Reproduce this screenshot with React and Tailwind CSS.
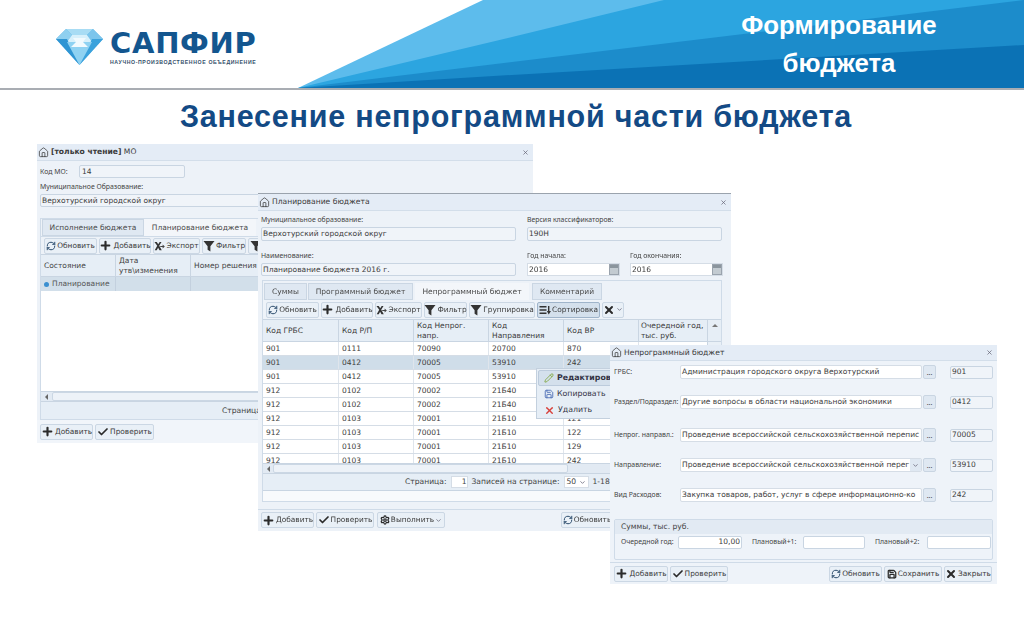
import { Home, Plus, Check, X, RefreshCw, Settings, Save, Pencil, ChevronDown } from 'lucide-react';

const VALUE = "font-['DejaVu_Sans',sans-serif] text-[7.5px] text-[#3c3c3c]";
const LABEL = "font-['Noto_Sans',sans-serif] text-[6.9px] text-[#444] leading-[10px] whitespace-nowrap";

function Funnel({ size = 12, className = '' }) {
  return (
    <svg width={size} height={size} viewBox="0 0 12 12" className={className}>
      <path d="M0.5 1h11L7.4 6.2V11.5L4.6 9.8V6.2z" fill="#333" />
    </svg>
  );
}

function ExportIcon() {
  return (
    <svg width="11" height="10" viewBox="0 0 12 10">
      <path d="M0.5 0.5h2.5l1.6 2.6L6.2.5h2L5.7 4.7l2.8 4.8H6L4.5 6.9 3 9.5H.8l2.7-4.7z" fill="#333" />
      <path d="M6.8 5h2.6V3.4L11.8 5.6 9.4 7.8V6.2H6.8z" fill="#444" />
    </svg>
  );
}

function SortIcon() {
  return (
    <svg width="12" height="10" viewBox="0 0 12 10">
      <path d="M0.5 1h7v1.6h-7zM0.5 4.2h7v1.6h-7zM0.5 7.4h7V9h-7z" fill="#333" />
      <path d="M9 1h1.4v5H12L9.7 9.4 7.9 6H9z" fill="#333" />
    </svg>
  );
}

function Btn({ icon, children, className = '', active = false }) {
  return (
    <div
      className={`h-[16px] shrink-0 flex items-center justify-center gap-[1px] rounded-[2px] border px-[1px] font-['DejaVu_Sans',sans-serif] text-[7.4px] leading-none text-[#3b3b3b] whitespace-nowrap [&>svg]:shrink-0 ${active ? 'border-[#9fb4ca] bg-[#d4e0ec]' : 'border-[#cbd7e4] bg-[#e9f0f7]'} ${className}`}
    >
      {icon}
      {children}
    </div>
  );
}

const refresh = <RefreshCw size={10} strokeWidth={2.4} className="text-[#2f4f6f]" />;
const plus = <Plus size={13} strokeWidth={4} className="text-[#2b2b2b]" />;
const check = <Check size={12} strokeWidth={3.5} className="text-[#2b2b2b]" />;
const cross = <X size={12} strokeWidth={4} className="text-[#2b2b2b]" />;

function TitleBar({ title, className = '' }) {
  return (
    <div className={`flex items-center shrink-0 gap-[2px] bg-[#e4ecf6] border-b border-[#d3deea] pl-[1px] pr-[4px] ${className}`}>
      <Home size={11} strokeWidth={1.6} className="text-[#333] shrink-0" />
      <div className="text-[7.6px] font-['DejaVu_Sans',sans-serif] text-[#3a3a3a] flex-1 whitespace-nowrap">{title}</div>
      <X size={7} strokeWidth={2.5} className="text-[#667]" />
    </div>
  );
}

function Field({ children, className = '' }) {
  return (
    <div className={`${VALUE} shrink-0 flex items-center overflow-hidden whitespace-nowrap rounded-[2px] border border-[#c9d5e2] bg-[#f0f4f9] pl-[1px] ${className}`}>
      {children}
    </div>
  );
}

function Tab({ children, active, className = '' }) {
  return (
    <div className={`shrink-0 flex items-center justify-center font-['DejaVu_Sans',sans-serif] text-[7.5px] text-[#4a4a4a] whitespace-nowrap ${active ? 'bg-[#f3f6fa]' : 'bg-[#dfe8f2] border border-[#cad6e3]'} ${className}`}>
      {children}
    </div>
  );
}

const ROWS = [
  ['901', '0111', '70090', '20700', '870'],
  ['901', '0412', '70005', '53910', '242'],
  ['901', '0412', '70005', '53910', ''],
  ['912', '0102', '70002', '21Б40', ''],
  ['912', '0102', '70002', '21Б40', ''],
  ['912', '0103', '70001', '21Б10', '121'],
  ['912', '0103', '70001', '21Б10', '122'],
  ['912', '0103', '70001', '21Б10', '129'],
  ['912', '0103', '70001', '21Б10', '242'],
];

function BudgetTable() {
  return (
    <div className="relative flex-1 flex flex-col overflow-hidden">
      <div className="h-[23px] shrink-0 grid grid-cols-[76px_75px_75px_75px_75px_68px_1fr] bg-[#e6eef6] border-y border-[#c9d5e2] text-[7.5px] leading-[10px] font-['DejaVu_Sans',sans-serif] text-[#3b3b3b]">
        <div className="flex items-center px-[3px] border-r border-[#c9d5e2]">Код ГРБС</div>
        <div className="flex items-center px-[3px] border-r border-[#c9d5e2]">Код Р/П</div>
        <div className="flex items-center px-[3px] border-r border-[#c9d5e2]">Код Непрог. напр.</div>
        <div className="flex items-center px-[3px] border-r border-[#c9d5e2]">Код Направления</div>
        <div className="flex items-center px-[3px] border-r border-[#c9d5e2]">Код ВР</div>
        <div className="flex items-center px-[2px] whitespace-nowrap">Очередной год,<br />тыс. руб.</div>
        <div className="flex justify-center pt-[4px] border-l border-[#c9d5e2]">
          <div className="w-0 h-0 border-x-[3px] border-x-transparent border-b-[3px] border-b-[#777]" />
        </div>
      </div>
      <div className="h-[121px] overflow-hidden bg-white">
        {ROWS.map((row, i) => (
          <div
            key={i}
            className={`h-[14px] grid grid-cols-[76px_75px_75px_75px_75px_68px_1fr] border-b border-[#d5dde6] ${VALUE} ${i === 1 ? 'bg-[#cfdde9]' : 'bg-white'}`}
          >
            {row.map((cell, j) => (
              <div key={j} className="flex items-center px-[3px] border-r border-[#dfe5ec]">{cell}</div>
            ))}
            <div />
            <div className="bg-[#e9f0f7] border-l border-[#c9d5e2]" />
          </div>
        ))}
      </div>
      <div className="h-[11px] shrink-0 flex items-center bg-[#e2eaf3] border-y border-[#c9d5e2] pl-[4px]">
        <div className="w-0 h-0 border-y-[3px] border-y-transparent border-r-[3px] border-r-[#666]" />
        <div className="ml-[3px] h-[9px] w-[295px] bg-[#edf2f8] border border-[#cbd7e4] rounded-[2px]" />
      </div>
      <div className="h-[17px] shrink-0 flex items-center pl-[142px] bg-[#e6eef6] border-b border-[#c9d5e2] text-[7.6px] font-['DejaVu_Sans',sans-serif] text-[#444] whitespace-nowrap">
        <span>Страница:</span>
        <div className="ml-[5px] w-[17px] h-[12px] bg-white border border-[#d5dde6] flex items-center justify-end pr-[1px]">1</div>
        <span className="ml-[3px]">Записей на странице:</span>
        <div className="ml-[4px] w-[25px] h-[12px] bg-white border border-[#d5dde6] flex items-center justify-between px-[2px]">
          50
          <ChevronDown size={7} strokeWidth={3} className="text-[#778]" />
        </div>
        <span className="ml-[4px]">1-18 из 18</span>
      </div>
    </div>
  );
}

function FormRow({ label, value, code, className = '', combo = false }) {
  return (
    <div className={`flex items-center shrink-0 h-[14px] ${className}`}>
      <div className={`${LABEL} w-[66px] shrink-0`}>{label}</div>
      <div className={`${VALUE} w-[242px] h-[14px] shrink-0 flex items-center overflow-hidden whitespace-nowrap bg-white border border-[#d5dde6] rounded-[2px] pl-[1px] relative`}>
        <span>{value}</span>
        {combo && (
          <div className="absolute right-0 top-0 h-full w-[11px] bg-[#dfe8f2] flex items-center justify-center">
            <ChevronDown size={7} strokeWidth={3} className="text-[#778]" />
          </div>
        )}
      </div>
      <div className="ml-[1px] w-[13px] h-[14px] shrink-0 bg-[#dfe8f2] border border-[#c9d5e2] rounded-[2px] flex items-center justify-center text-[7px] text-[#444] leading-none">...</div>
      <Field className="ml-[14px] w-[43px] h-[13px]">{code}</Field>
    </div>
  );
}

function Diamond() {
  return (
    <svg width="47" height="37" viewBox="0 0 47 37" className="shrink-0">
      <path d="M10 1h27l10 10-23.5 26L0 11z" fill="#5ab4e5" />
      <path d="M10 1h27l-6 6H16z" fill="#a8dcf4" />
      <path d="M0 11l10-10 6 6-5 7z" fill="#8fd0f0" />
      <path d="M47 11L37 1l-6 6 5 7z" fill="#7cc5ec" />
      <path d="M16 7h15l5 7H11z" fill="#d7f0fb" />
      <path d="M0 11h11l12.5 26z" fill="#2f95d3" />
      <path d="M47 11H36L23.5 37z" fill="#3ba2dc" />
      <path d="M11 14h25L23.5 37z" fill="#8fd2f2" />
      <path d="M17 10h13l-3 4 5 5H15l5-5z" fill="#f1fafe" />
    </svg>
  );
}

function HeaderArt() {
  return (
    <svg viewBox="0 0 1024 88" width="1024" height="88" className="absolute left-0 top-0">
      <path d="M298 88L483 0H1024V88z" fill="#5dbcec" />
      <path d="M298 88L512 37L664 0H1024V88z" fill="#2ca5e0" />
      <path d="M298 88L512 62L1024 0V88z" fill="#1c8ccb" />
      <path d="M298 88L512 75L1024 45V88z" fill="#0b72b5" />
    </svg>
  );
}

function DateField({ value }) {
  return (
    <div className={`${VALUE} mt-[2px] w-[93px] h-[13px] flex items-center justify-between bg-white border border-[#d5dde6] pl-[1px]`}>
      {value}
      <div className="w-[10px] h-[11px] flex flex-col bg-[#c3cbd1] border border-[#9aa3ad]">
        <div className="h-[3px] bg-[#8b959d]" />
      </div>
    </div>
  );
}

export default function App() {
  return (
    <div className="w-[1024px] h-[640px] overflow-hidden bg-white flex flex-col">
      <header className="relative h-[90px] shrink-0 border-b-2 border-[#a9adb3] flex">
        <HeaderArt />
        <div className="relative ml-[56px] mt-[28px] flex gap-[7px] items-start">
          <Diamond />
          <div className="flex flex-col w-[147px] pt-[2px]">
            <div className="font-['DejaVu_Sans',sans-serif] font-bold text-[29px] leading-[26px] tracking-[0.7px] text-[#13568f] whitespace-nowrap">САПФИР</div>
            <div className="mt-[3px] font-['Liberation_Sans',sans-serif] font-bold text-[5.2px] leading-[6px] tracking-[0.62px] text-[#35506b] whitespace-nowrap">НАУЧНО-ПРОИЗВОДСТВЕННОЕ ОБЪЕДИНЕНИЕ</div>
          </div>
        </div>
        <div className="relative ml-auto mr-[65px] w-[240px] pt-[6px] text-center font-['Liberation_Sans',sans-serif] font-bold text-[25.8px] leading-[38px] text-white">
          Формирование<br />бюджета
        </div>
      </header>

      <h1 className="h-[54px] shrink-0 pt-[6px] pl-[8px] text-center font-['Liberation_Sans',sans-serif] font-bold text-[30.5px] leading-[40px] tracking-[0.77px] text-[#134a85] whitespace-nowrap">
        Занесение непрограммной части бюджета
      </h1>

      <div className="relative flex-1 blur-[0.3px]">
        {/* окно МО */}
        <section className="absolute left-[37px] top-0 w-[496px] h-[299px] flex flex-col bg-[#edf2f8]">
          <TitleBar title={<><b>[только чтение]</b> МО</>} className="h-[17px]" />
          <div className="mt-[4px] flex items-center pl-[3px]">
            <div className={`${LABEL} w-[39px]`}>Код МО:</div>
            <Field className="w-[106px] h-[13px] pl-[2px]">14</Field>
          </div>
          <div className={`${LABEL} mt-[4px] pl-[3px]`}>Муниципальное Образование:</div>
          <Field className="mt-[2px] ml-[3px] w-[488px] h-[13px]">Верхотурский городской округ</Field>
          <div className="mt-[11px] mx-[3px] flex-1 flex flex-col border border-[#cfdbe8]">
            <div className="h-[17px] flex shrink-0 pl-[1px] bg-[#edf2f8]">
              <Tab className="w-[102px]">Исполнение бюджета</Tab>
              <Tab active className="w-[112px]">Планирование бюджета</Tab>
            </div>
            <div className="h-[18px] shrink-0 flex items-center gap-[2px] px-[3px] bg-[#edf2f8] border-t border-[#cfdbe8]">
              <Btn icon={refresh} className="w-[53px]">Обновить</Btn>
              <Btn icon={plus} className="w-[52px]">Добавить</Btn>
              <Btn icon={<ExportIcon />} className="w-[47px]">Экспорт</Btn>
              <Btn icon={<Funnel />} className="w-[44px]">Фильтр</Btn>
              <Btn icon={<Funnel />} className="w-[44px] !justify-start" />
            </div>
            <div className="h-[23px] shrink-0 grid grid-cols-[75px_75px_1fr] bg-[#e6eef6] border-y border-[#c9d5e2] text-[7.5px] leading-[10px] font-['DejaVu_Sans',sans-serif] text-[#444]">
              <div className="flex items-center px-[3px] border-r border-[#c9d5e2]">Состояние</div>
              <div className="flex items-center px-[3px] border-r border-[#c9d5e2]">Дата утв\изменения</div>
              <div className="flex items-center px-[3px]">Номер решения</div>
            </div>
            <div className="h-[14px] shrink-0 grid grid-cols-[75px_75px_1fr] bg-[#d2dfea] text-[7.5px] font-['DejaVu_Sans',sans-serif] text-[#555]">
              <div className="flex items-center gap-[3px] px-[3px] border-r border-[#c3d0de]">
                <span className="w-[5px] h-[5px] rounded-full bg-[#3a8fd0]" />
                Планирование
              </div>
              <div className="border-r border-[#c3d0de]" />
            </div>
            <div className="flex-1 bg-white" />
            <div className="h-[11px] shrink-0 flex items-center bg-[#e2eaf3] border-y border-[#c9d5e2] pl-[4px]">
              <div className="w-0 h-0 border-y-[3px] border-y-transparent border-r-[3px] border-r-[#666]" />
              <div className="ml-[4px] h-[9px] flex-1 bg-[#edf2f8] border border-[#cbd7e4] rounded-[2px]" />
            </div>
            <div className="h-[17px] shrink-0 flex items-center pl-[181px] bg-[#e6eef6] font-['DejaVu_Sans',sans-serif] text-[7.6px] text-[#444]">Страница</div>
          </div>
          <div className="h-[23px] shrink-0 flex items-center gap-[2px] pl-[3px] bg-[#f1f5fa]">
            <Btn icon={plus} className="w-[53px]">Добавить</Btn>
            <Btn icon={check} className="w-[59px]">Проверить</Btn>
          </div>
        </section>

        {/* окно планирования */}
        <section className="absolute left-[258px] top-[49px] w-[473px] h-[338px] flex flex-col bg-[#edf2f8] border-t border-[#9aa3ad]">
          <TitleBar title="Планирование бюджета" className="h-[17px]" />
          <div className="mt-[4px] px-[3px] flex">
            <div className="w-[266px]">
              <div className={LABEL}>Муниципальное образование:</div>
              <Field className="mt-[2px] w-[255px] h-[14px]">Верхотурский городской округ</Field>
            </div>
            <div className="flex-1">
              <div className={LABEL}>Версия классификаторов:</div>
              <Field className="mt-[2px] w-[195px] h-[14px]">190Н</Field>
            </div>
          </div>
          <div className="mt-[10px] px-[3px] flex">
            <div className="w-[266px]">
              <div className={LABEL}>Наименование:</div>
              <Field className="mt-[2px] w-[255px] h-[13px]">Планирование бюджета 2016 г.</Field>
            </div>
            <div className="w-[103px]">
              <div className={LABEL}>Год начала:</div>
              <DateField value="2016" />
            </div>
            <div>
              <div className={LABEL}>Год окончания:</div>
              <DateField value="2016" />
            </div>
          </div>
          <div className="mt-[4px] mx-[4px] w-[460px] h-[222px] flex flex-col border border-[#cfdbe8] bg-[#f3f6fa]">
            <div className="h-[19px] shrink-0 flex pl-[1px] pt-[2px] bg-[#edf2f8]">
              <Tab className="w-[43px]">Суммы</Tab>
              <Tab className="ml-[1px] w-[105px]">Программный бюджет</Tab>
              <Tab active className="ml-[2px] w-[114px]">Непрограммный бюджет</Tab>
              <Tab className="ml-[3px] w-[70px]">Комментарий</Tab>
            </div>
            <div className="h-[19px] shrink-0 flex items-center gap-[2px] pl-[3px] bg-[#eef3f9]">
              <Btn icon={refresh} className="w-[53px]">Обновить</Btn>
              <Btn icon={plus} className="w-[52px]">Добавить</Btn>
              <Btn icon={<ExportIcon />} className="w-[47px]">Экспорт</Btn>
              <Btn icon={<Funnel />} className="w-[43px]">Фильтр</Btn>
              <Btn icon={<Funnel />} className="w-[66px]">Группировка</Btn>
              <Btn active icon={<SortIcon />} className="w-[63px]">Сортировка</Btn>
              <Btn icon={cross} className="w-[22px]">
                <ChevronDown size={7} strokeWidth={3} className="text-[#778]" />
              </Btn>
            </div>
            <BudgetTable />
            <div className="h-[10px] shrink-0 bg-[#f8fafc]" />
          </div>
          <div className="mt-[7px] h-[21px] shrink-0 flex items-center gap-[2px] pl-[3px] bg-[#edf2f8] border-t border-[#cfdbe8]">
            <Btn icon={plus} className="w-[53px]">Добавить</Btn>
            <Btn icon={check} className="w-[58px]">Проверить</Btn>
            <Btn icon={<Settings size={10} strokeWidth={3} className="text-[#2b2b2b]" />} className="w-[68px] ml-[1px]">
              Выполнить
              <ChevronDown size={7} strokeWidth={3} className="text-[#778]" />
            </Btn>
            <Btn icon={refresh} className="w-[52px] ml-auto mr-[118px]">Обновить</Btn>
          </div>

          {/* контекстное меню */}
          <div className="absolute left-[278px] top-[174px] w-[80px] h-[51px] flex flex-col bg-[#e6eef6] border border-[#c3d0de] font-['DejaVu_Sans',sans-serif] text-[7.8px] text-[#334]">
            <div className="mx-[1px] mt-[1px] h-[16px] flex items-center gap-[3px] pl-[5px] bg-[#d4e0ec] border border-[#bccbdc] rounded-[2px] font-semibold whitespace-nowrap">
              <Pencil size={10} strokeWidth={2} className="text-[#7ea63a] shrink-0" />
              Редактировать
            </div>
            <div className="h-[16px] flex items-center gap-[3px] pl-[7px]">
              <Save size={10} strokeWidth={2} className="text-[#3f63b0] shrink-0" />
              Копировать
            </div>
            <div className="h-[16px] flex items-center gap-[3px] pl-[7px]">
              <X size={11} strokeWidth={3} className="text-[#d8403a] shrink-0" />
              Удалить
            </div>
          </div>
        </section>

        {/* окно непрограммного бюджета */}
        <section className="absolute left-[610px] top-[201px] w-[387px] h-[239px] flex flex-col bg-[#eef3f9]">
          <TitleBar title="Непрограммный бюджет" className="h-[16px]" />
          <div className="pl-[4px] flex flex-col">
            <FormRow className="mt-[4px]" label="ГРБС:" value="Администрация городского округа Верхотурский" code="901" />
            <FormRow className="mt-[16px]" label="Раздел/Подраздел:" value="Другие вопросы в области национальной экономики" code="0412" />
            <FormRow className="mt-[19px]" label="Непрог. направл.:" value="Проведение всероссийской сельскохозяйственной перепис" code="70005" />
            <FormRow className="mt-[16px]" combo label="Направление:" value="Проведение всероссийской сельскохозяйственной перег" code="53910" />
            <FormRow className="mt-[16px]" label="Вид Расходов:" value="Закупка товаров, работ, услуг в сфере информационно-ко" code="242" />
          </div>
          <div className="mt-[17px] mx-[4px] h-[41px] shrink-0 flex flex-col border border-[#cfdbe8] rounded-[2px]">
            <div className="h-[14px] shrink-0 flex items-center pl-[6px] bg-[#e2eaf3] font-['DejaVu_Sans',sans-serif] text-[7.6px] text-[#444]">Суммы, тыс. руб.</div>
            <div className="mt-[1px] flex items-center pl-[6px] h-[14px]">
              <div className={`${LABEL} w-[57px]`}>Очередной год:</div>
              <Field className="w-[64px] h-[13px] justify-end pr-[1px] !bg-white">10,00</Field>
              <div className={`${LABEL} ml-[10px] w-[51px]`}>Плановый+1:</div>
              <Field className="w-[62px] h-[13px] !bg-white" />
              <div className={`${LABEL} ml-[10px] w-[52px]`}>Плановый+2:</div>
              <Field className="w-[64px] h-[13px] !bg-white" />
            </div>
          </div>
          <div className="flex-1 mt-[2px] flex items-center gap-[2px] px-[4px] border-t border-[#cfdbe8]">
            <Btn icon={plus} className="w-[54px]">Добавить</Btn>
            <Btn icon={check} className="w-[58px]">Проверить</Btn>
            <Btn icon={refresh} className="w-[53px] ml-auto">Обновить</Btn>
            <Btn icon={<Save size={10} strokeWidth={3} className="text-[#2b2b2b]" />} className="w-[58px]">Сохранить</Btn>
            <Btn icon={cross} className="w-[48px] mr-[1px]">Закрыть</Btn>
          </div>
        </section>
      </div>
    </div>
  );
}
